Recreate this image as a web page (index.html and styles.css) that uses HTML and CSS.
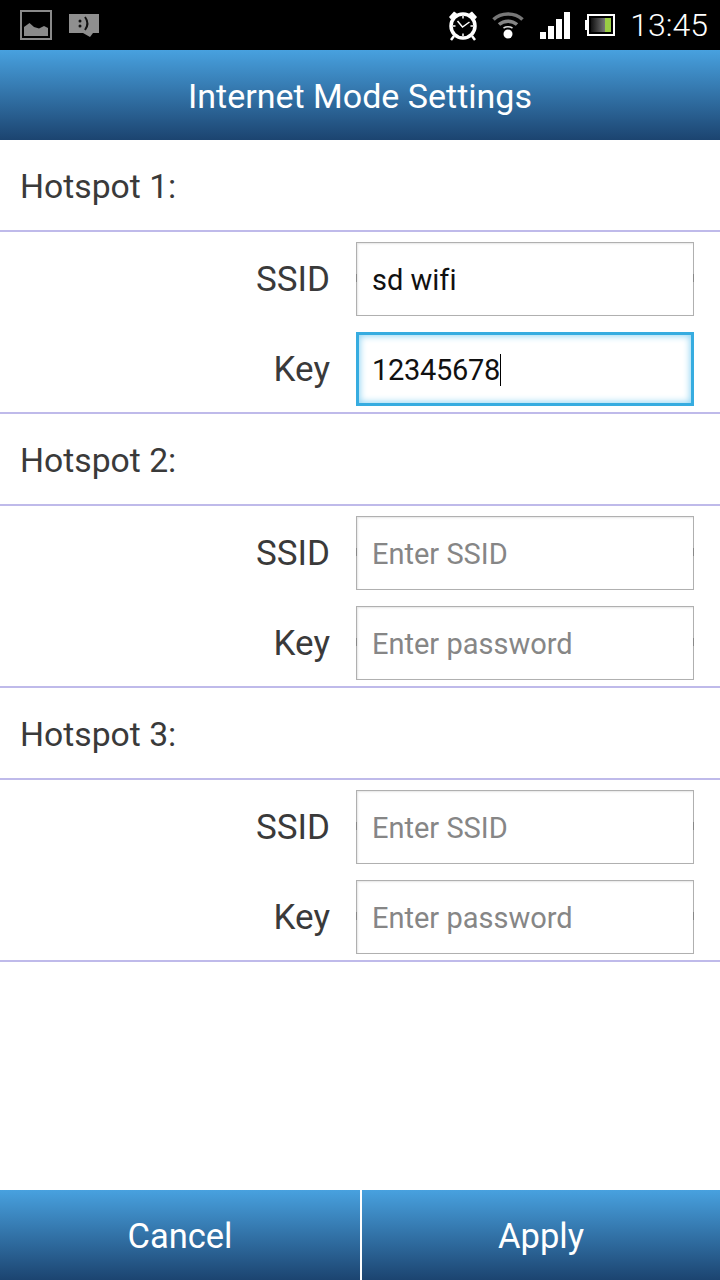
FILE: index.html
```html
<!DOCTYPE html>
<html lang="en">
<head>
<meta charset="utf-8">
<title>Internet Mode Settings</title>
<link rel="stylesheet" href="styles.css">
</head>
<body>
<div class="screen">
  <div class="status">
    <div class="status-left">
      <svg class="ic-pic" width="32" height="30" viewBox="0 0 32 30"><rect x="1" y="1" width="30" height="28" fill="none" stroke="#8a8a8a" stroke-width="2"/><path d="M4 26V17L9.500 13L14 17L19 18.500L24 16L28 18V26Z" fill="#8a8a8a"/></svg>
      <svg class="ic-msg" width="30" height="24" viewBox="0 0 30 24"><path d="M0 0H30V19H24L21 23L14 19H0Z" fill="#8f8f8f"/><circle cx="11" cy="7" r="1.500" fill="#111"/><circle cx="11" cy="12" r="1.500" fill="#111"/><path d="M16 3C19 7 19 12 16 16" fill="none" stroke="#111" stroke-width="2"/></svg>
    </div>
    <div class="status-right">
      <svg class="ic-alarm" width="32" height="32" viewBox="0 0 32 32"><circle cx="16" cy="17" r="12" fill="none" stroke="#fff" stroke-width="3.500"/><path d="M2 8L7 2.500L10 4.500L4 10.500Z M30 8L25 2.500L22 4.500L28 10.500Z" fill="#fff"/><path d="M7 27L4 31 M25 27L28 31" fill="none" stroke="#fff" stroke-width="2.500"/><path d="M16 7V9.500 M16 24.500V27 M6 17H8.500 M23.500 17H26" fill="none" stroke="#fff" stroke-width="1.500"/><path d="M10.500 12L15.500 18L22.500 13" fill="none" stroke="#fff" stroke-width="1.500"/></svg>
      <svg class="ic-wifi" width="32" height="29" viewBox="0 0 32 29"><path d="M1.500 9.500C9 2 23 2 30.500 9.500" fill="none" stroke="#777" stroke-width="3.500"/><path d="M7 14.500C12 10 20 10 25 14.500" fill="none" stroke="#858585" stroke-width="3.500"/><path d="M11.500 18C14 16.500 18 16.500 20.500 18" fill="none" stroke="#ddd" stroke-width="1.500"/><circle cx="16" cy="24" r="4.500" fill="#fff"/></svg>
      <svg class="ic-signal" width="30" height="27" viewBox="0 0 30 27"><rect x="0" y="20" width="6" height="7" fill="#fff"/><rect x="8" y="14" width="6" height="13" fill="#fff"/><rect x="16" y="7" width="6" height="20" fill="#fff"/><rect x="24" y="0" width="6" height="27" fill="#fff"/></svg>
      <svg class="ic-batt" width="30" height="22" viewBox="0 0 30 22"><defs><linearGradient id="bt" x1="0" x2="1" y1="0" y2="0"><stop offset="0" stop-color="#111"/><stop offset="1" stop-color="#777"/></linearGradient></defs><rect x="0" y="6" width="2" height="10" fill="#fff"/><rect x="3" y="1" width="26" height="20" fill="none" stroke="#fff" stroke-width="2"/><rect x="6" y="4" width="14" height="14" fill="url(#bt)"/><rect x="20" y="4" width="6" height="14" fill="#9c4"/></svg>
      <span class="clock">13:45</span>
    </div>
  </div>
  <header class="bar title"><span class="bar-text">Internet Mode Settings</span></header>
  <main class="content">
    <section class="hotspot">
      <h2 class="hotspot-name"><span class="name-text">Hotspot 1:</span></h2>
      <div class="rows">
        <div class="row"><span class="label">SSID</span><div class="field"><span class="value">sd wifi</span></div></div>
        <div class="row"><span class="label">Key</span><div class="field focused"><span class="value digits">12345678</span><span class="caret"></span></div></div>
      </div>
    </section>
    <section class="hotspot">
      <h2 class="hotspot-name"><span class="name-text">Hotspot 2:</span></h2>
      <div class="rows">
        <div class="row"><span class="label">SSID</span><div class="field"><span class="hint">Enter SSID</span></div></div>
        <div class="row"><span class="label">Key</span><div class="field"><span class="hint">Enter password</span></div></div>
      </div>
    </section>
    <section class="hotspot">
      <h2 class="hotspot-name"><span class="name-text">Hotspot 3:</span></h2>
      <div class="rows">
        <div class="row"><span class="label">SSID</span><div class="field"><span class="hint">Enter SSID</span></div></div>
        <div class="row"><span class="label">Key</span><div class="field"><span class="hint">Enter password</span></div></div>
      </div>
    </section>
  </main>
  <footer class="footer">
    <div class="bar action"><span class="bar-text">Cancel</span></div>
    <div class="bar action"><span class="bar-text">Apply</span></div>
  </footer>
</div>
</body>
</html>
```
FILE: styles.css
```css
* { box-sizing: border-box; }
html, body { margin: 0; padding: 0; background: #fff; }
.screen {
  width: 720px;
  height: 1280px;
  display: flex;
  flex-direction: column;
  font-family: Roboto, "Liberation Sans", sans-serif;
  font-variant-ligatures: none;
  color: #3a3a3a;
  overflow: hidden;
}
.status {
  height: 50px;
  background: #000;
  display: flex;
  justify-content: space-between;
  align-items: center;
  flex: none;
}
.status-left { display: flex; align-items: center; padding-left: 20px; gap: 17px; }
.ic-msg { margin-top: 2px; }
.status-right { display: flex; align-items: center; padding-right: 12px; }
.ic-alarm { margin-right: 13px; }
.ic-wifi { margin-right: 16px; margin-top: -2px; }
.ic-signal { margin-right: 15px; }
.ic-batt { margin-right: 15px; }
.clock { color: #fff; font-size: 32px; font-weight: 300; line-height: 50px; }
.bar {
  background: linear-gradient(#48a1df, #1c4470);
  color: #fff;
  display: flex;
  align-items: center;
  justify-content: center;
  height: 90px;
  font-size: 34px;
}
.bar-text { position: relative; top: 1px; }
.title { flex: none; }
.content { flex: 1; }
.hotspot-name {
  margin: 0;
  height: 92px;
  padding: 0 0 2px 20px;
  display: flex;
  align-items: center;
  font-size: 33.700px;
  font-weight: 400;
  border-bottom: 2px solid #bfbaea;
}
.name-text { position: relative; top: 2px; }
.rows {
  height: 182px;
  padding: 10px 26px 6px 0;
  display: flex;
  flex-direction: column;
  gap: 16px;
  border-bottom: 2px solid #bfbaea;
}
.row { display: flex; align-items: center; height: 74px; }
.label { width: 330px; text-align: right; font-size: 35px; }
.field {
  position: relative;
  margin-left: 26px;
  width: 338px;
  height: 74px;
  border: 1px solid #b0b0b0;
  box-shadow: inset 1px 1px 2px #e6e6e6;
  background: #fff;
  display: flex;
  align-items: center;
  padding: 2px 0 0 15px;
  font-size: 29px;
}
.field::before, .field::after {
  content: "";
  position: absolute;
  top: 31px;
  width: 1px;
  height: 8px;
  background: #888;
}
.field::before { left: -1px; }
.field::after { right: -1px; }
.focused {
  border: 3px solid #36ace0;
  box-shadow: inset 0 0 7px 1px #8fd4f3;
  padding-left: 13px;
}
.focused::before, .focused::after { display: none; }
.value { color: #111; }
.digits { letter-spacing: -0.300px; }
.hint { color: #868686; }
.caret { width: 1px; height: 32px; background: #000; }
.footer { display: flex; justify-content: space-between; flex: none; font-size: 34.500px; }
.action { width: 360px; font-size: 34.500px; }
.action + .action { width: 358px; }
```
